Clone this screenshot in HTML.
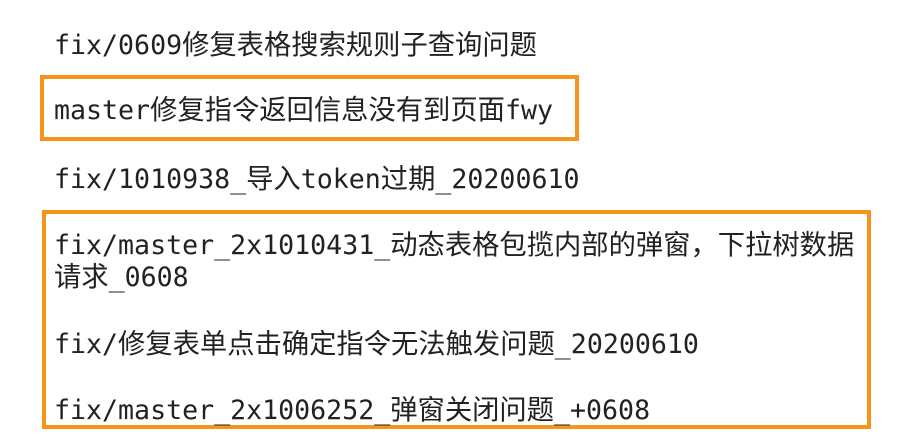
<!DOCTYPE html>
<html><head><meta charset="utf-8"><style>
html,body{margin:0;padding:0;background:#fff;width:902px;height:445px;overflow:hidden;position:relative}
.l{position:absolute;left:54px;height:32px;line-height:32px;font-family:"DejaVu Sans Mono","Liberation Mono","Noto Sans CJK SC",monospace;font-size:26.6px;color:#222;white-space:nowrap}
.l span{font-family:"Noto Sans CJK SC","WenQuanYi Zen Hei",sans-serif;font-size:27.3px}
.b{position:absolute;border:4px solid #F7941D;box-sizing:border-box}
</style></head><body>
<div class="b" style="left:40px;top:75px;width:539px;height:66px"></div>
<div class="b" style="left:42px;top:210px;width:829px;height:219px"></div>
<div class="l" style="top:26px">fix/0609<span>修复表格搜索规则子查询问题</span></div>
<div class="l" style="top:91px">master<span>修复指令返回信息没有到页面</span>fwy</div>
<div class="l" style="top:160px">fix/1010938_<span>导入</span>token<span>过期</span>_20200610</div>
<div class="l" style="top:226px">fix/master_2x1010431_<span>动态表格包揽内部的弹窗，下拉树数据</span></div>
<div class="l" style="top:258px"><span>请求</span>_0608</div>
<div class="l" style="top:325px">fix/<span>修复表单点击确定指令无法触发问题</span>_20200610</div>
<div class="l" style="top:391px">fix/master_2x1006252_<span>弹窗关闭问题</span>_+0608</div>
</body></html>
